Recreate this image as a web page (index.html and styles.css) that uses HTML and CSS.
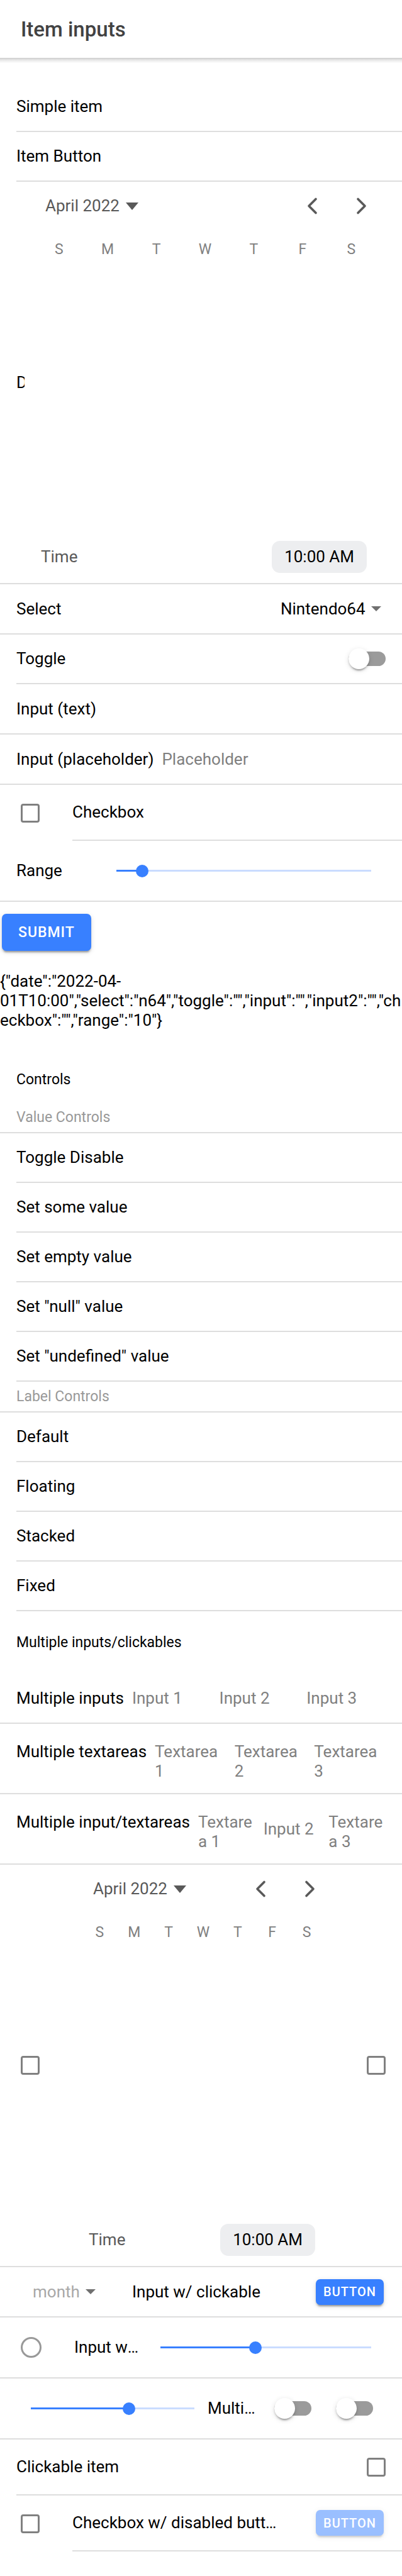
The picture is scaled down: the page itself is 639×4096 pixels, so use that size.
FILE: index.html
```
<!DOCTYPE html>
<html lang="en">
<head>
<meta charset="utf-8">
<meta name="viewport" content="width=device-width, initial-scale=1">
<title>Item inputs</title>
<link rel="stylesheet" href="styles.css">
</head>
<body>
<header class="header"><h1 class="title">Item inputs</h1></header>
<main class="content">
  <form class="form">
    <div class="item"><div class="inner">Simple item</div></div>
    <button type="button" class="item"><span class="inner">Item Button</span></button>

    <div class="item full tall">
      <div class="inner">
        <span class="date-label">Date</span>
        <div class="datetime">
          <div class="calendar-head">
            <button type="button" class="month-year">April 2022
              <svg class="caret-large" viewBox="0 0 20 12"><path d="M0 0h20L10 12z"/></svg>
            </button>
            <button type="button" class="arrow" aria-label="Previous month"><svg class="chevron" viewBox="0 0 512 512"><path d="M328 112L184 256l144 144"/></svg></button>
            <button type="button" class="arrow" aria-label="Next month"><svg class="chevron" viewBox="0 0 512 512"><path d="M184 112l144 144-144 144"/></svg></button>
          </div>
          <div class="weekdays"><span>S</span><span>M</span><span>T</span><span>W</span><span>T</span><span>F</span><span>S</span></div>
          <div class="days"></div>
          <div class="time-row"><span>Time</span><button type="button" class="time">10:00 AM</button></div>
        </div>
      </div>
    </div>

    <div class="item full field">
      <div class="inner">
        <label class="grow" for="console">Select</label>
        <span class="select-wrap">
          <select id="console" class="select"><option>Nintendo64</option></select>
          <svg class="caret" viewBox="0 0 16 8"><path d="M0 0h16L8 8z"/></svg>
        </span>
      </div>
    </div>
    <div class="item">
      <div class="inner">
        <label class="grow" for="toggle">Toggle</label>
        <input type="checkbox" role="switch" id="toggle" class="toggle">
      </div>
    </div>
    <div class="item full field">
      <div class="inner"><label class="label" for="input">Input (text)</label><input type="text" id="input" class="input"></div>
    </div>
    <div class="item full field">
      <div class="inner"><label class="label" for="input2">Input (placeholder)</label><input type="text" id="input2" class="input" placeholder="Placeholder"></div>
    </div>
    <div class="item boxed">
      <input type="checkbox" id="checkbox" class="checkbox">
      <div class="inner"><label for="checkbox">Checkbox</label></div>
    </div>
    <div class="item full slider">
      <div class="inner">
        <label class="range-label" for="range">Range</label>
        <input type="range" id="range" class="range range-end" value="10" style="--value:10%">
      </div>
    </div>
    <button type="submit" class="button submit">SUBMIT</button>
  </form>

  <div class="result">{"date":"2022-04-01T10:00","select":"n64","toggle":"","input":"","input2":"","checkbox":"","range":"10"}</div>

  <section>
    <h2 class="list-header">Controls</h2>
    <h3 class="divider">Value Controls</h3>
    <button type="button" class="item"><span class="inner">Toggle Disable</span></button>
    <button type="button" class="item"><span class="inner">Set some value</span></button>
    <button type="button" class="item"><span class="inner">Set empty value</span></button>
    <button type="button" class="item"><span class="inner">Set "null" value</span></button>
    <button type="button" class="item"><span class="inner">Set "undefined" value</span></button>
    <h3 class="divider">Label Controls</h3>
    <button type="button" class="item"><span class="inner">Default</span></button>
    <button type="button" class="item"><span class="inner">Floating</span></button>
    <button type="button" class="item"><span class="inner">Stacked</span></button>
    <button type="button" class="item"><span class="inner">Fixed</span></button>
  </section>

  <section>
    <h2 class="list-header spaced">Multiple inputs/clickables</h2>
    <div class="item full field multi">
      <div class="inner">
        <label class="label" for="mi1">Multiple inputs</label>
        <input type="text" id="mi1" class="input" placeholder="Input 1">
        <input type="text" class="input" placeholder="Input 2" aria-label="Input 2">
        <input type="text" class="input" placeholder="Input 3" aria-label="Input 3">
      </div>
    </div>
    <div class="item full multi areas">
      <div class="inner">
        <label class="label" for="mt1">Multiple textareas</label>
        <textarea id="mt1" class="textarea" rows="2" placeholder="Textarea 1"></textarea>
        <textarea class="textarea" rows="2" placeholder="Textarea 2" aria-label="Textarea 2"></textarea>
        <textarea class="textarea" rows="2" placeholder="Textarea 3" aria-label="Textarea 3"></textarea>
      </div>
    </div>
    <div class="item full multi areas">
      <div class="inner">
        <label class="label" for="mx1">Multiple input/textareas</label>
        <textarea id="mx1" class="textarea" rows="2" placeholder="Textarea 1"></textarea>
        <input type="text" class="input middle" placeholder="Input 2" aria-label="Input 2">
        <textarea class="textarea" rows="2" placeholder="Textarea 3" aria-label="Textarea 3"></textarea>
      </div>
    </div>

    <div class="item full tall boxed">
      <input type="checkbox" class="checkbox" aria-label="Start">
      <div class="inner">
        <div class="datetime">
          <div class="calendar-head">
            <button type="button" class="month-year">April 2022
              <svg class="caret-large" viewBox="0 0 20 12"><path d="M0 0h20L10 12z"/></svg>
            </button>
            <button type="button" class="arrow" aria-label="Previous month"><svg class="chevron" viewBox="0 0 512 512"><path d="M328 112L184 256l144 144"/></svg></button>
            <button type="button" class="arrow" aria-label="Next month"><svg class="chevron" viewBox="0 0 512 512"><path d="M184 112l144 144-144 144"/></svg></button>
          </div>
          <div class="weekdays"><span>S</span><span>M</span><span>T</span><span>W</span><span>T</span><span>F</span><span>S</span></div>
          <div class="days"></div>
          <div class="time-row"><span>Time</span><button type="button" class="time">10:00 AM</button></div>
        </div>
        <input type="checkbox" class="checkbox end" aria-label="End">
      </div>
    </div>

    <div class="item full field">
      <div class="inner month-row">
        <span class="select-wrap month">
          <select class="select" aria-label="Month"><option>month</option></select>
          <svg class="caret" viewBox="0 0 16 8"><path d="M0 0h16L8 8z"/></svg>
        </span>
        <span class="grow">Input w/ clickable</span>
        <button type="button" class="button small">BUTTON</button>
      </div>
    </div>
    <div class="item full slider boxed">
      <input type="radio" id="radio" class="radio">
      <div class="inner">
        <label class="short" for="radio">Input w/ radio</label>
        <input type="range" class="range range-end" value="45" aria-label="Range" style="--value:45%">
      </div>
    </div>
    <div class="item full slider">
      <div class="inner toggles">
        <input type="range" class="range" value="60" aria-label="Range" style="--value:60%">
        <span class="short tiny">Multiple clickables</span>
        <input type="checkbox" role="switch" class="toggle" aria-label="First toggle">
        <input type="checkbox" role="switch" class="toggle" aria-label="Second toggle">
      </div>
    </div>
    <div class="item check">
      <div class="inner"><label class="grow" for="clickable">Clickable item</label><input type="checkbox" id="clickable" class="checkbox end"></div>
    </div>
    <div class="item boxed">
      <input type="checkbox" id="last" class="checkbox">
      <div class="inner button-row"><label class="grow ellipsis" for="last">Checkbox w/ disabled buttons</label><button type="button" class="button small" disabled>BUTTON</button></div>
    </div>
  </section>
</main>
</body>
</html>
```
FILE: styles.css
```
:root {
  --primary: #3880ff;
  --line: #dedede;
  --muted: #808080;
  --pad: 26px;
}
* { box-sizing: border-box; }
body {
  margin: 0;
  background: #fff;
  color: #000;
  font: 26px/31px Roboto, sans-serif;
}
button, input, select, textarea {
  margin: 0;
  padding: 0;
  border: 0;
  background: none;
  color: inherit;
  font: inherit;
}
h1, h2, h3 { margin: 0; font-weight: 400; }

.header {
  position: relative;
  display: flex;
  align-items: center;
  height: 92px;
  padding: 0 33px;
}
.header::after {
  content: "";
  position: absolute;
  top: 100%;
  left: 0;
  right: 0;
  height: 8px;
  background: linear-gradient(rgba(0, 0, 0, .2), rgba(0, 0, 0, .08) 50%, rgba(0, 0, 0, .01));
}
.title { color: #424242; font-size: 33px; line-height: 39px; font-weight: 500; }
.content { padding: 39px 0; }

/* Items */
.item {
  display: flex;
  width: 100%;
  min-height: 79px;
  padding-left: var(--pad);
  text-align: left;
}
.inner {
  display: flex;
  flex: 1;
  align-items: center;
  align-self: stretch;
  min-width: 0;
  padding-right: var(--pad);
  border-bottom: 2px solid var(--line);
}
.full { border-bottom: 2px solid var(--line); }
.full > .inner { border-bottom: 0; }
.field { min-height: 80px; }
.slider { min-height: 97px; }
.check, .boxed { min-height: 89px; }
.boxed { align-items: center; padding-left: 33px; }
.slider.boxed { min-height: 97px; }
.item.tall { min-height: 640px; }
.grow { flex: 1; }
.label { flex: none; margin-right: 13px; }
.ellipsis, .short { overflow: hidden; white-space: nowrap; text-overflow: ellipsis; }

/* Text fields */
.input, .textarea { flex: 1; width: 0; min-width: 0; padding-right: 13px; outline: 0; }
.input { height: 57px; }
.textarea { height: 62px; resize: none; overflow: hidden; }
.input::placeholder, .textarea::placeholder { color: var(--muted); opacity: 1; }
.multi > .inner { padding-right: 13px; }
.areas { min-height: 112px; }
.areas > .inner { align-items: flex-start; padding-top: 29px; padding-bottom: 19px; }
.areas .middle { height: 52px; }

/* Select */
.select-wrap { display: flex; align-items: center; gap: 9px; padding-right: 7px; }
.select { appearance: none; height: 57px; }
.caret { width: 16px; height: 8px; fill: #707070; }
.month { width: 184px; padding-left: 26px; }
.month .select { color: #a8a8a8; }
.month-row { padding-right: 29px; }

/* Checkbox and radio */
.checkbox, .radio {
  appearance: none;
  flex: none;
  width: 30px;
  height: 30px;
  margin-right: 52px;
  border: 3px solid var(--muted);
  border-radius: 4px;
}
.radio { width: 33px; height: 33px; border-color: #999; border-radius: 50%; }
.checkbox.end { margin: 0 0 0 52px; }

/* Toggle */
.toggle {
  appearance: none;
  display: grid;
  flex: none;
  align-items: center;
  width: 59px;
  height: 33px;
}
.toggle::before, .toggle::after { content: ""; grid-area: 1 / 1; }
.toggle::before { height: 23px; border-radius: 12px; background: #9b9b9b; }
.toggle::after {
  width: 33px;
  height: 33px;
  border-radius: 50%;
  background: #fff;
  box-shadow: 0 5px 2px -3px rgba(0, 0, 0, .2), 0 3px 3px rgba(0, 0, 0, .14), 0 2px 8px rgba(0, 0, 0, .12);
}
.toggles { gap: 39px; padding-left: 13px; padding-right: 46px; }
.toggles .range { margin-right: -28px; }

/* Range */
.range {
  appearance: none;
  flex: 1;
  width: 0;
  min-width: 0;
  height: 20px;
  background: linear-gradient(to right, var(--primary) var(--value), #cadcff var(--value)) center / calc(100% - 20px) 3px no-repeat;
}
.range::-webkit-slider-thumb {
  appearance: none;
  width: 20px;
  height: 20px;
  border-radius: 50%;
  background: var(--primary);
}
.range-end { margin-right: 13px; }
.range-label { width: 149px; }
.short { width: 106px; margin-right: 21px; }
.tiny { width: 80px; margin-right: -13px; }

/* Buttons */
.button {
  height: 59px;
  padding: 0 26px;
  border-radius: 7px;
  background: var(--primary);
  color: #fff;
  font-size: 23px;
  font-weight: 500;
  letter-spacing: 1px;
  box-shadow: 0 5px 2px -3px rgba(0, 0, 0, .2), 0 3px 3px rgba(0, 0, 0, .14), 0 2px 8px rgba(0, 0, 0, .12);
}
.submit { display: block; margin: 19px 3px 0; }
.small { height: 41px; padding: 0 12px; font-size: 20px; line-height: 24px; }
.small:disabled { opacity: .5; }
.button-row { gap: 52px; padding-right: 29px; }

.result { margin: 33px 0 41px; overflow-wrap: break-word; }

/* Headings */
.list-header, .divider {
  display: flex;
  align-items: center;
  padding: 0 var(--pad);
  font-size: 23px;
}
.list-header { height: 74px; }
.spaced { margin: 12px 0 13px; }
.divider { height: 49px; border-bottom: 2px solid var(--line); color: #999; }

/* Date and time */
.date-label { width: 13px; overflow: hidden; }
.datetime {
  display: flex;
  flex: 1;
  flex-direction: column;
  align-self: stretch;
  color: #595959;
}
.calendar-head { display: flex; height: 77px; }
.month-year {
  display: flex;
  flex: 1;
  align-items: center;
  gap: 10px;
  padding-left: 33px;
}
.caret-large { width: 20px; height: 12px; fill: #595959; }
.arrow { display: grid; place-items: center; width: 78px; }
.chevron {
  width: 39px;
  height: 39px;
  fill: none;
  stroke: #595959;
  stroke-width: 48;
  stroke-linecap: round;
  stroke-linejoin: round;
}
.weekdays {
  display: grid;
  grid-template-columns: repeat(7, 1fr);
  align-items: center;
  height: 61px;
  padding: 0 16px;
  color: var(--muted);
  font-size: 23px;
  text-align: center;
}
.days { flex: 1; }
.time-row {
  display: flex;
  align-items: center;
  justify-content: space-between;
  padding: 0 30px 16px 26px;
}
.time { height: 51px; padding: 0 20px; border-radius: 13px; background: #edeef0; color: #000; }
```
